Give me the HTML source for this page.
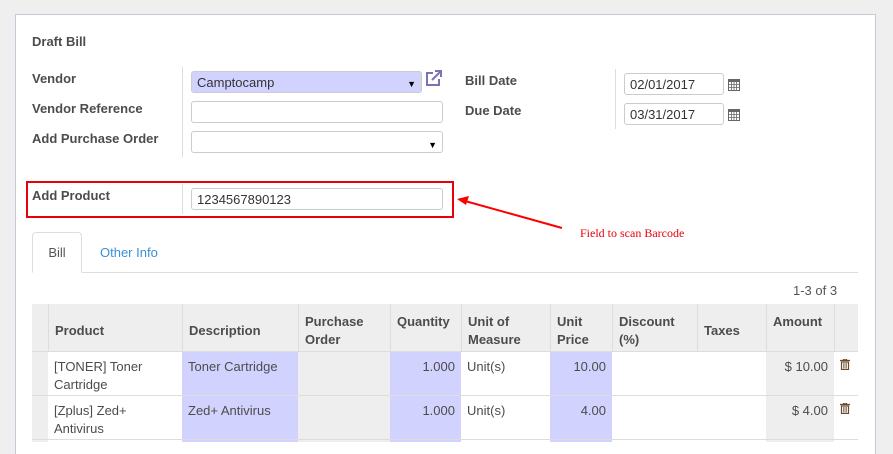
<!DOCTYPE html>
<html><head><style>
*{box-sizing:border-box;margin:0;padding:0}
body{width:893px;height:442px;overflow:hidden;background:#efefef;font-family:"Liberation Sans",sans-serif;font-size:13px;color:#4c4c4c;position:relative}
.a{position:absolute}
.sheet{left:15px;top:14px;width:861px;height:440px;background:#fff;border:1px solid #cbc7d6;border-bottom:none}
.lbl{font-weight:bold;color:#4c4c4c;font-size:13px}
.inp{position:absolute;height:22px;border:1px solid #ccc;border-radius:3px;background:#fff;font-size:13px;color:#333;padding:3px 5px;line-height:15px}
.tri{position:absolute;right:5px;top:5px;font-size:9px;color:#000}
.th{position:absolute;top:304px;height:47px;background:#eee;font-weight:bold;color:#4c4c4c;padding:9px 6px 0;line-height:18px;border-left:1px solid #ddd}
.c{position:absolute;padding:6px 6px;line-height:18px;color:#4c4c4c}
</style></head><body>
<div class="a sheet"></div>
<div class="a lbl" style="left:32px;top:34px">Draft Bill</div>

<div class="a lbl" style="left:32px;top:71px">Vendor</div>
<div class="a lbl" style="left:32px;top:101px">Vendor Reference</div>
<div class="a lbl" style="left:32px;top:131px">Add Purchase Order</div>
<div class="a" style="left:182px;top:67px;width:1px;height:90px;background:#ddd"></div>
<div class="inp" style="left:191px;top:71px;width:231px;background:#d2d2ff">Camptocamp<span class="tri">▼</span></div>
<svg class="a" style="left:424px;top:70px" width="20" height="18" viewBox="0 0 20 18"><path d="M9 3H3v12h12V9" fill="none" stroke="#7a72b4" stroke-width="2"/><path d="M8 10L17 1M11 1h6v6" fill="none" stroke="#7a72b4" stroke-width="2"/></svg>
<div class="inp" style="left:191px;top:101px;width:252px"></div>
<div class="inp" style="left:191px;top:131px;width:252px"><span class="tri" style="top:6px">▼</span></div>

<div class="a lbl" style="left:465px;top:73px">Bill Date</div>
<div class="a lbl" style="left:465px;top:103px">Due Date</div>
<div class="a" style="left:615px;top:69px;width:1px;height:60px;background:#ddd"></div>
<div class="inp" style="left:624px;top:73px;width:100px">02/01/2017</div>
<div class="inp" style="left:624px;top:103px;width:100px">03/31/2017</div>
<svg class="a" style="left:728px;top:78px" width="12" height="13" viewBox="0 0 12 13"><rect x="0.5" y="1.5" width="11" height="11" fill="none" stroke="#666"/><rect x="0" y="1" width="12" height="3" fill="#666"/><path d="M0 6.5h12M0 9.5h12M3.5 4v9M6 4v9M8.5 4v9" stroke="#666" stroke-width="0.8"/></svg>
<svg class="a" style="left:728px;top:108px" width="12" height="13" viewBox="0 0 12 13"><rect x="0.5" y="1.5" width="11" height="11" fill="none" stroke="#666"/><rect x="0" y="1" width="12" height="3" fill="#666"/><path d="M0 6.5h12M0 9.5h12M3.5 4v9M6 4v9M8.5 4v9" stroke="#666" stroke-width="0.8"/></svg>

<div class="a" style="left:26px;top:181px;width:428px;height:37px;border:2px solid #e8000d"></div>
<div class="a lbl" style="left:32px;top:188px">Add Product</div>
<div class="a" style="left:182px;top:184px;width:1px;height:30px;background:#ddd"></div>
<div class="inp" style="left:191px;top:188px;width:252px">1234567890123</div>

<svg class="a" style="left:455px;top:190px" width="120" height="45"><line x1="10" y1="11" x2="107" y2="38" stroke="#f00" stroke-width="2"/><path d="M2 9L14 6L11 15Z" fill="#f00"/></svg>
<div class="a" style="left:580px;top:226px;font-family:'Liberation Serif',serif;font-size:12px;color:#e8000d">Field to scan Barcode</div>

<div class="a" style="left:32px;top:272px;width:826px;height:1px;background:#ddd"></div>
<div class="a" style="left:32px;top:232px;width:50px;height:41px;border:1px solid #ddd;border-bottom:1px solid #fff;border-radius:4px 4px 0 0;background:#fff;text-align:center;line-height:40px;color:#555">Bill</div>
<div class="a" style="left:100px;top:245px;color:#3a8fd6">Other Info</div>

<div class="a" style="left:793px;top:283px;color:#555">1-3 of 3</div>

<div class="a" style="left:32px;top:304px;width:826px;height:47px;background:#eee"></div>
<div class="th" style="left:48px;width:134px;padding-top:18px">Product</div>
<div class="th" style="left:182px;width:116px;padding-top:18px">Description</div>
<div class="th" style="left:298px;width:92px">Purchase<br>Order</div>
<div class="th" style="left:390px;width:71px">Quantity</div>
<div class="th" style="left:461px;width:89px">Unit of<br>Measure</div>
<div class="th" style="left:550px;width:62px">Unit<br>Price</div>
<div class="th" style="left:612px;width:85px">Discount<br>(%)</div>
<div class="th" style="left:697px;width:69px;padding-top:18px">Taxes</div>
<div class="th" style="left:766px;width:68px">Amount</div>
<div class="th" style="left:834px;width:24px"></div>
<div class="a" style="left:32px;top:351px;width:826px;height:1px;background:#ddd"></div>

<div class="a" style="left:32px;top:352px;width:16px;height:90px;background:#eee"></div>
<div class="a" style="left:182px;top:352px;width:116px;height:90px;background:#d2d2ff"></div>
<div class="a" style="left:298px;top:352px;width:92px;height:90px;background:#eee"></div>
<div class="a" style="left:390px;top:352px;width:71px;height:90px;background:#d2d2ff"></div>
<div class="a" style="left:550px;top:352px;width:62px;height:90px;background:#d2d2ff"></div>
<div class="a" style="left:766px;top:352px;width:68px;height:90px;background:#eee"></div>
<div class="a" style="left:32px;top:395px;width:826px;height:1px;background:#ddd"></div>
<div class="a" style="left:32px;top:439px;width:826px;height:1px;background:#ddd"></div>

<div class="c" style="left:48px;top:352px">[TONER] Toner<br>Cartridge</div>
<div class="c" style="left:182px;top:352px">Toner Cartridge</div>
<div class="c" style="left:390px;top:352px;width:71px;text-align:right">1.000</div>
<div class="c" style="left:461px;top:352px">Unit(s)</div>
<div class="c" style="left:550px;top:352px;width:62px;text-align:right">10.00</div>
<div class="c" style="left:766px;top:352px;width:68px;text-align:right">$ 10.00</div>
<svg class="a" style="left:840px;top:359px" width="10" height="11" viewBox="0 0 10 11"><path d="M0 1.5h10M3.5 1.5V0h3v1.5" fill="none" stroke="#6b4a2a" stroke-width="1.2"/><rect x="1.5" y="3" width="7" height="7.5" fill="none" stroke="#6b4a2a" stroke-width="1.2"/><path d="M3.7 4v5.5M5 4v5.5M6.3 4v5.5" stroke="#6b4a2a" stroke-width="0.7"/></svg>

<div class="c" style="left:48px;top:396px">[Zplus] Zed+<br>Antivirus</div>
<div class="c" style="left:182px;top:396px">Zed+ Antivirus</div>
<div class="c" style="left:390px;top:396px;width:71px;text-align:right">1.000</div>
<div class="c" style="left:461px;top:396px">Unit(s)</div>
<div class="c" style="left:550px;top:396px;width:62px;text-align:right">4.00</div>
<div class="c" style="left:766px;top:396px;width:68px;text-align:right">$ 4.00</div>
<svg class="a" style="left:840px;top:403px" width="10" height="11" viewBox="0 0 10 11"><path d="M0 1.5h10M3.5 1.5V0h3v1.5" fill="none" stroke="#6b4a2a" stroke-width="1.2"/><rect x="1.5" y="3" width="7" height="7.5" fill="none" stroke="#6b4a2a" stroke-width="1.2"/><path d="M3.7 4v5.5M5 4v5.5M6.3 4v5.5" stroke="#6b4a2a" stroke-width="0.7"/></svg>
</body></html>
